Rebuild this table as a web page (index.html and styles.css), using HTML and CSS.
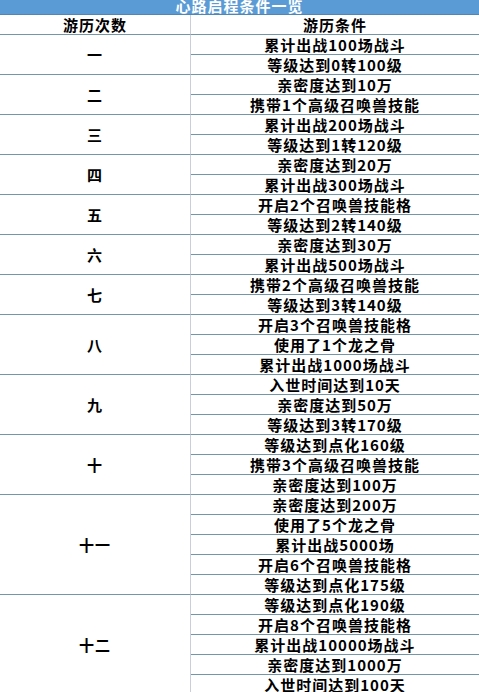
FILE: index.html
```html
<!DOCTYPE html>
<html lang="zh">
<head>
<meta charset="utf-8">
<title>心路启程条件一览</title>
<link rel="stylesheet" href="styles.css">
</head>
<body>
<div class="sheet">
  <div class="title">心路启程条件一览</div>
  <div class="grid">
    <div class="cell head left">游历次数</div>
    <div class="cell head">游历条件</div>

    <div class="cell left span2">一</div>
    <div class="cell">累计出战100场战斗</div>
    <div class="cell">等级达到0转100级</div>

    <div class="cell left span2">二</div>
    <div class="cell">亲密度达到10万</div>
    <div class="cell">携带1个高级召唤兽技能</div>

    <div class="cell left span2">三</div>
    <div class="cell">累计出战200场战斗</div>
    <div class="cell">等级达到1转120级</div>

    <div class="cell left span2">四</div>
    <div class="cell">亲密度达到20万</div>
    <div class="cell">累计出战300场战斗</div>

    <div class="cell left span2">五</div>
    <div class="cell">开启2个召唤兽技能格</div>
    <div class="cell">等级达到2转140级</div>

    <div class="cell left span2">六</div>
    <div class="cell">亲密度达到30万</div>
    <div class="cell">累计出战500场战斗</div>

    <div class="cell left span2">七</div>
    <div class="cell">携带2个高级召唤兽技能</div>
    <div class="cell">等级达到3转140级</div>

    <div class="cell left span3">八</div>
    <div class="cell">开启3个召唤兽技能格</div>
    <div class="cell">使用了1个龙之骨</div>
    <div class="cell">累计出战1000场战斗</div>

    <div class="cell left span3">九</div>
    <div class="cell">入世时间达到10天</div>
    <div class="cell">亲密度达到50万</div>
    <div class="cell">等级达到3转170级</div>

    <div class="cell left span3">十</div>
    <div class="cell">等级达到点化160级</div>
    <div class="cell">携带3个高级召唤兽技能</div>
    <div class="cell">亲密度达到100万</div>

    <div class="cell left span5">十一</div>
    <div class="cell">亲密度达到200万</div>
    <div class="cell">使用了5个龙之骨</div>
    <div class="cell">累计出战5000场</div>
    <div class="cell">开启6个召唤兽技能格</div>
    <div class="cell">等级达到点化175级</div>

    <div class="cell left span5">十二</div>
    <div class="cell">等级达到点化190级</div>
    <div class="cell">开启8个召唤兽技能格</div>
    <div class="cell">累计出战10000场战斗</div>
    <div class="cell">亲密度达到1000万</div>
    <div class="cell">入世时间达到100天</div>
  </div>
</div>
</body>
</html>
```
FILE: styles.css
```css
html, body {
  margin: 0;
  padding: 0;
  background: #ffffff;
}

.sheet {
  width: 479px;
  font-family: "Noto Sans CJK SC", "DejaVu Sans", sans-serif;
  font-weight: bold;
  color: #000000;
}

.title {
  height: 15px;
  box-sizing: border-box;
  background: #5b9bd5;
  border-bottom: 1px solid #4f86b6;
  color: #ffffff;
  font-size: 15px;
  letter-spacing: 1px;
  line-height: 12px;
  text-align: center;
  overflow: hidden;
}

.grid {
  display: grid;
  grid-template-columns: 191px 1fr;
  grid-auto-rows: 20px;
}

.cell {
  box-sizing: border-box;
  display: flex;
  align-items: center;
  justify-content: center;
  border-bottom: 1px solid #7596a9;
  font-size: 15px;
  letter-spacing: 1px;
  line-height: 1;
  white-space: nowrap;
}

.left {
  grid-column: 1;
  border-right: 1px solid #c9cedb;
}

.span2 { grid-row: span 2; }
.span3 { grid-row: span 3; }
.span5 { grid-row: span 5; }
```
